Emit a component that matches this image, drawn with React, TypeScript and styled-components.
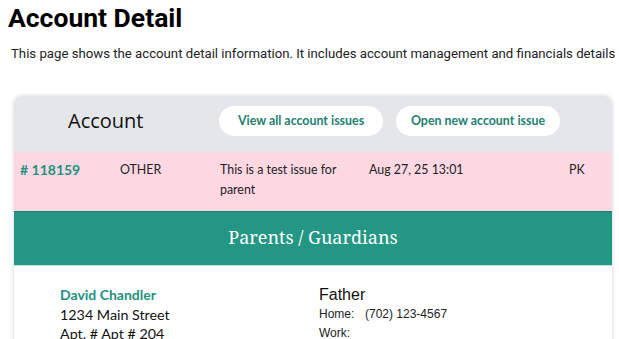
import styled, { createGlobalStyle } from 'styled-components';

const GlobalStyle = createGlobalStyle`
  body {
    margin: 0;
    background: #fff;
    font-family: Roboto, "Liberation Sans", sans-serif;
    color: #111;
  }
`;

const Page = styled.div`
  padding: 0 0 0 8px;
`;

const Title = styled.h1`
  margin: 0;
  padding-top: 2px;
  font-family: Roboto, sans-serif;
  font-size: 26.5px;
  font-weight: 700;
  line-height: 32px;
  color: #000;
`;

const Intro = styled.p`
  margin: 10px 0 0 3px;
  font-family: Roboto, sans-serif;
  font-size: 13.2px;
  line-height: 20px;
  color: #222;
  white-space: nowrap;
`;

const Card = styled.section`
  margin: 32px 0 0 6px;
  width: 598px;
  border-radius: 8px 8px 0 0;
  box-shadow: 0 0 4px rgba(0, 0, 0, 0.18);
  overflow: hidden;
  font-family: Lato, "Open Sans", sans-serif;
`;

const CardHeader = styled.div`
  height: 56px;
  padding-bottom: 7px;
  box-sizing: border-box;
  background: #e5e6ea;
  display: flex;
  align-items: center;
`;

const CardTitle = styled.h2`
  margin: 0 0 0 54px;
  width: 151px;
  font-family: "Open Sans", Lato, sans-serif;
  font-size: 20px;
  font-weight: 400;
  color: #111;
`;

const Pill = styled.button`
  width: 164px;
  height: 30px;
  margin-right: 13px;
  padding: 0;
  border: none;
  border-radius: 15px;
  background: #fff;
  color: #23806f;
  font-family: Lato, "Open Sans", sans-serif;
  font-size: 12.4px;
  font-weight: 700;
  cursor: pointer;
`;

const IssueRow = styled.div`
  height: 59px;
  background: #fdd8e3;
  display: flex;
  align-items: flex-start;
  padding-top: 8px;
  box-sizing: border-box;
  font-size: 12.4px;
  line-height: 20px;
  color: #222;
`;

const Cell = styled.div<{ $w: number }>`
  width: ${({ $w }) => $w}px;
  flex: none;
  box-sizing: border-box;
`;

const IssueId = styled(Cell)`
  padding-left: 6px;
  color: #23917f;
  font-weight: 700;
  font-size: 14px;
`;

const SectionBar = styled.div`
  height: 55px;
  background: #239784;
  border-top: 1px solid #1e7e6f;
  border-bottom: 1px solid #bfe3dc;
  box-sizing: border-box;
  display: flex;
  align-items: center;
  justify-content: center;
  padding-bottom: 4px;
  color: #fff;
  font-family: "Noto Serif", "DejaVu Serif", "Liberation Serif", serif;
  font-size: 18px;
`;

const Guardians = styled.div`
  display: grid;
  grid-template-columns: 259px 1fr;
  padding: 19px 0 0 46px;
  background: #fff;
  height: 60px;
`;

const Name = styled.div`
  font-size: 14px;
  font-weight: 700;
  color: #23917f;
  line-height: 20px;
`;

const AddressLine = styled.div`
  font-size: 14.3px;
  line-height: 19px;
  color: #111;
`;

const Relation = styled.div`
  font-family: "Liberation Sans", Arial, sans-serif;
  font-size: 16px;
  line-height: 20px;
  color: #111;
`;

const PhoneRow = styled.div`
  display: flex;
  font-family: "Liberation Sans", Arial, sans-serif;
  font-size: 12px;
  line-height: 19px;
  color: #222;
`;

const PhoneLabel = styled.span`
  width: 46px;
`;

export default function App() {
  return (
    <>
      <GlobalStyle />
      <Page>
        <Title>Account Detail</Title>
        <Intro>
          This page shows the account detail information. It includes account management and financials details
        </Intro>
        <Card>
          <CardHeader>
            <CardTitle>Account</CardTitle>
            <Pill>View all account issues</Pill>
            <Pill>Open new account issue</Pill>
          </CardHeader>
          <IssueRow>
            <IssueId $w={106}># 118159</IssueId>
            <Cell $w={100}>OTHER</Cell>
            <Cell $w={149}>This is a test issue for parent</Cell>
            <Cell $w={200}>Aug 27, 25 13:01</Cell>
            <Cell $w={30}>PK</Cell>
          </IssueRow>
          <SectionBar>Parents / Guardians</SectionBar>
          <Guardians>
            <div>
              <Name>David Chandler</Name>
              <AddressLine>1234 Main Street</AddressLine>
              <AddressLine>Apt. # Apt # 204</AddressLine>
            </div>
            <div>
              <Relation>Father</Relation>
              <PhoneRow>
                <PhoneLabel>Home:</PhoneLabel>
                <span>(702) 123-4567</span>
              </PhoneRow>
              <PhoneRow>
                <PhoneLabel>Work:</PhoneLabel>
              </PhoneRow>
            </div>
          </Guardians>
        </Card>
      </Page>
    </>
  );
}
